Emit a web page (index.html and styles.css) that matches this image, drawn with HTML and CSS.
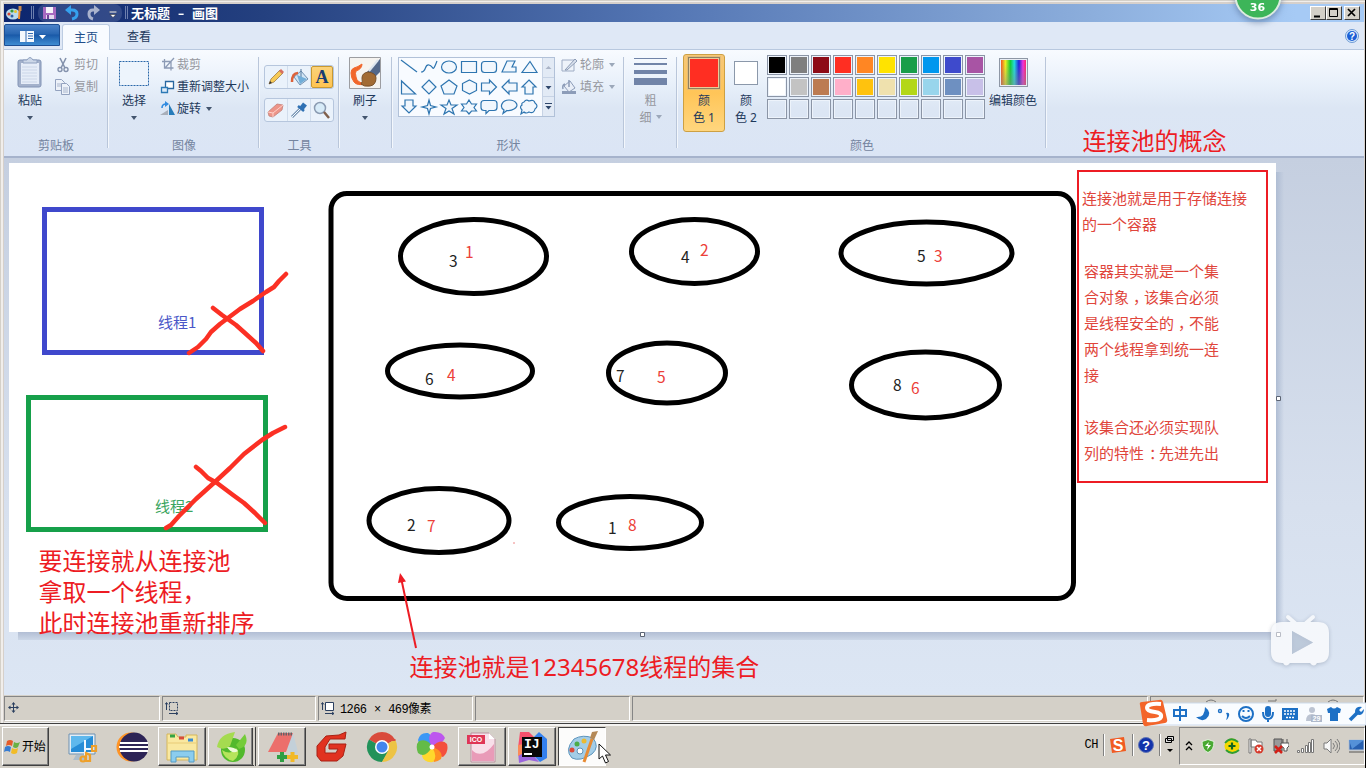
FILE: index.html
```html
<!DOCTYPE html>
<html lang="zh-CN">
<head>
<meta charset="utf-8">
<title>无标题 - 画图</title>
<link rel="stylesheet" href="styles.css">
</head>
<body>
<div class="screen">
<div class="window">
  <header class="titlebar">
    <svg class="quick" width="127" height="18" viewBox="4 4 127 18">
      <ellipse cx="13" cy="14" rx="7" ry="5.5" fill="#b9d9ec"/><circle cx="9" cy="14" r="1.6" fill="#d8472f"/><circle cx="12" cy="11" r="1.6" fill="#3b9a3a"/><circle cx="15.500" cy="11.500" r="1.500" fill="#e8c22a"/><circle cx="12" cy="16" r="1.500" fill="#2e5fa4"/><path d="M20 6v5" stroke="#c98a4c" stroke-width="3"/><path d="M19.500 11l-.5 8" stroke="#f08b28" stroke-width="2"/>
      <path d="M31.500 6v13M33.500 6v13M125.500 6v13M127.500 6v13" stroke="#6d7fae"/>
      <rect x="38" y="4" width="84" height="18" rx="8" fill="#7888b5" opacity=".3"/>
      <path d="M43 7h13v12H43z" fill="#a86ac1"/><path d="M46 7h7v6h-7z" fill="#f6f3fa"/><path d="M46 15h8v4h-8z" fill="#e5d9ef"/><path d="M48 15v4" stroke="#72449a" stroke-width="2"/>
      <path d="M68 10h4q5 0 5 4t-5 5" fill="none" stroke="#35a1ee" stroke-width="3"/><path d="M65 10l6-5v10z" fill="#35a1ee"/>
      <path d="M97 10h-4q-4 0-4 4t4 5" fill="none" stroke="#aab3cd" stroke-width="3"/><path d="M100 10l-6-5v10z" fill="#aab3cd"/>
      <path d="M109 12h8M110 14.500h6l-3 3z" fill="#fff" stroke="#222" stroke-width=".5"/><path d="M109.500 12h7" stroke="#fff"/>
    </svg>
    <h1 class="title">无标题<span class="dash">-</span>画图</h1>
    <div class="winbtns">
      <span class="winbtn"><svg width="14" height="12"><path d="M3 9.500h6" stroke="#000" stroke-width="2"/></svg></span>
      <span class="winbtn"><svg width="14" height="12"><path d="M2.500 1.500h8v8h-8zM2 2.500h9" fill="none" stroke="#000"/></svg></span>
      <span class="winbtn close"><svg width="14" height="12"><path d="M3 2l7 7M10 2l-7 7" stroke="#000" stroke-width="1.700"/></svg></span>
    </div>
  </header>

  <nav class="tabs">
    <button class="filebtn"><svg width="30" height="14" viewBox="0 0 30 14"><path d="M1 1h14v11H1z" fill="#f5f9fd"/><path d="M7 1v11M9 3.500h5M9 6h5M9 8.500h5" stroke="#366db2"/><path d="M20 5h7l-3.500 4z" fill="#fff"/></svg></button>
    <a class="tab active">主页</a>
    <a class="tab">查看</a>
    <svg class="help" width="14" height="14" viewBox="0 0 14 14"><circle cx="7" cy="7" r="6.500" fill="#d8e9fb" stroke="#6f9bd4"/><circle cx="7" cy="7" r="5" fill="#1c5fd6"/><text x="7" y="10.500" text-anchor="middle" class="qmark">?</text></svg>
  </nav>

  <section class="ribbon">
    <div class="group">
      <div class="tools clip">
        <div class="big">
          <svg width="26" height="32" viewBox="0 0 26 32"><rect x="1" y="3" width="23" height="27" rx="2" fill="#a3b1cb" stroke="#8294b6"/><path d="M4 6h18v21H4z" fill="#e6edf8"/><path d="M5 10h15M5 13h15M5 16h15M5 19h15M5 22h15M5 25h15" stroke="#cbd6e8"/><path d="M6 6V3h4q3-5 6 0h4v3z" fill="#ccd7e8" stroke="#8ea0bf"/></svg>
          <span>粘贴</span><i class="caret"></i>
        </div>
        <div class="list dim">
          <div class="cmd"><svg width="16" height="16" viewBox="0 0 16 16"><path d="M5 1l5 10M11 1L6 11" stroke="#8492ad" stroke-width="1.600"/><circle cx="5" cy="12.500" r="2" fill="none" stroke="#8492ad" stroke-width="1.400"/><circle cx="11" cy="12.500" r="2" fill="none" stroke="#8492ad" stroke-width="1.400"/></svg>剪切</div>
          <div class="cmd"><svg width="16" height="16" viewBox="0 0 16 16"><g fill="#edf2f9" stroke="#93a2bf"><path d="M.5.500h6l3 3v8h-9z"/><path d="M6.500 4.500h5l3 3v8h-8z"/></g><path d="M2 5h4M2 7h4M8 9h5M8 11h5M8 13h5" stroke="#a9b6cd"/></svg>复制</div>
        </div>
      </div>
      <div class="caption">剪贴板</div>
    </div>

    <div class="group">
      <div class="tools image">
        <div class="big">
          <svg width="32" height="32" viewBox="0 0 32 32"><path d="M1.500 4.500h29v24h-29z" fill="#edf4fc" stroke="#2866a8" stroke-dasharray="2 1"/></svg>
          <span>选择</span><i class="caret"></i>
        </div>
        <div class="list">
          <div class="cmd dim"><svg width="16" height="16" viewBox="0 0 16 16"><path d="M4.500 2v9h9M2 4.500h9v9M14 1L5 11" fill="none" stroke="#8d9bb5" stroke-width="1.300"/></svg>裁剪</div>
          <div class="cmd"><svg width="16" height="16" viewBox="0 0 16 16"><path d="M5.500 2.500h8v7h-8z" fill="#fff" stroke="#28669f" stroke-width="1.300"/><path d="M1.500 8.500h6v5h-6z" fill="#dceaf8" stroke="#2c79b5" stroke-width="1.300"/></svg>重新调整大小</div>
          <div class="cmd"><svg width="16" height="16" viewBox="0 0 16 16"><path d="M0 14h8V9z" fill="#a8aeb9"/><path d="M9 3v11h6z" fill="#277cba"/><path d="M2 7q0-4 4-4" fill="none" stroke="#318be0" stroke-width="1.600"/><path d="M5 0l4 3-4 3z" fill="#318be0"/></svg>旋转<i class="caret side"></i></div>
        </div>
      </div>
      <div class="caption">图像</div>
    </div>

    <div class="group">
      <div class="tools toolset">
        <div class="trio">
          <span><svg width="22" height="20" viewBox="0 0 22 20"><path d="M4 17l2-5 9-9 3 3-9 9z" fill="#f6ca57" stroke="#a07c48" stroke-width=".8"/><path d="M14 4l3 3 2-2-3-3z" fill="#d66f60"/><path d="M4 17l1-3 2 2z" fill="#333"/></svg></span>
          <span><svg width="22" height="20" viewBox="0 0 22 20"><path d="M6 10l7-6 7 8-8 6z" fill="#d0e5f5" stroke="#55799e" stroke-width=".8"/><path d="M13 2v9" stroke="#55799e"/><path d="M9 8l10 4-7 5z" fill="#71add8"/><path d="M10 6q-6 0-6 9" fill="none" stroke="#dc623b" stroke-width="2.500"/></svg></span>
          <span class="on">A</span>
        </div>
        <div class="trio">
          <span><svg width="22" height="20" viewBox="0 0 22 20"><path d="M3 12l9-8 6 1-1 5-9 7-4-1z" fill="#ed9589" stroke="#c08078" stroke-width=".8"/><path d="M3 12l5 1 10-8M8 13v4" fill="none" stroke="#ffd2ca"/></svg></span>
          <span><svg width="22" height="20" viewBox="0 0 22 20"><path d="M4 17l8-8" stroke="#7895b4" stroke-width="3"/><path d="M4 17l8-8" stroke="#f5fbff"/><path d="M10 6l6 5" stroke="#2f71b4" stroke-width="2.500"/><path d="M13 9l4-5" stroke="#2f71b4" stroke-width="5"/></svg></span>
          <span><svg width="22" height="20" viewBox="0 0 22 20"><circle cx="9" cy="8" r="5.500" fill="#d7ebf8" stroke="#8b9bb2" stroke-width="1.500"/><path d="M13 12l5 6" stroke="#80604b" stroke-width="2.500"/></svg></span>
        </div>
      </div>
      <div class="caption">工具</div>
    </div>

    <div class="group">
      <div class="tools brush">
        <div class="big"><svg width="32" height="32" viewBox="0 0 32 32"><path d="M.5.500h31v31H.5z" fill="#f5f3f0" stroke="#9c9da1"/><path d="M13 7Q9 10 5 11q-3 1-3 5 0 5 3 9 3 4 12 2-9-1-10-7-1-4 0-6 6-2 6-7z" fill="#f1662a" stroke="#f1662a"/><path d="M31 2v13l-6 6-7-6z" fill="#536789"/><path d="M29 3L20 14" stroke="#dde5ee" stroke-width="2"/><path d="M19 15q8 1 8 6 0 7-6 8-6 1-9-2 2-2 1-6 0-5 6-6z" fill="#a26b34" stroke="#79512b"/></svg><span>刷子</span><i class="caret"></i></div>
      </div>
    </div>

    <div class="group">
      <div class="tools shapes">
        <div class="gallery">
          <svg width="143" height="58" viewBox="399 58 143 58" fill="#f1f7fd" stroke="#2e75b0" stroke-width="1.200">
            <path d="M401 60l16 12" fill="none"/><path d="M421 72c6 0 3-8 8-7s3 9 8-4" fill="none"/><ellipse cx="449" cy="67" rx="7.500" ry="6"/><path d="M461.500 61.500h15v11h-15z"/><rect x="481.500" y="61.500" width="15" height="11" rx="3"/><path d="M502 72l5-11h8l-3 6h4v5z"/><path d="M530 61.500l7 11h-15z"/>
            <path d="M401.500 81v13h14z"/><path d="M429 80l7 7-7 7-7-7z"/><path d="M449 80l8 6-3 8h-10l-3-8z"/><path d="M469.500 80l7 3.500v7l-7 3.500-7-3.500v-7z"/><path d="M481.500 83h8v-3l7 7-7 7v-3h-8z"/><path d="M517 83h-8v-3l-7 7 7 7v-3h8z"/><path d="M529 80l7 7h-3v7h-8v-7h-3z"/>
            <path d="M405 100h8v6h3l-7 7-7-7h3z"/><path d="M429 100l1.500 5.500 5.500 1.500-5.500 1.500-1.500 5.500-1.500-5.500-5.500-1.500 5.500-1.500z"/><path d="M449 100l2 5h6l-5 3.500 2 5.500-5-3-5 3 2-5.500-5-3.500h6z"/><path d="M469 100l2.500 4h5l-2.500 3.500 2.500 3.500h-5l-2.500 3-2.500-3h-5l2.500-3.500-2.500-3.500h5z"/><path d="M484 100.500h10q3 0 3 3v4q0 3-3 3h-5l-3 3v-3h-2q-3 0-3-3v-4q0-3 3-3z"/><path d="M504 110c-5-3-2-10 5-10s11 6 5 9q-3 2-7 1.500l-4 3z"/><path d="M524 102q2-3 5-1 5-2 6 2 4 3 0 6-1 5-6 3-3 2-5 0l-3 2 1-4q-3-3 0-5-1-2 2-3z"/>
          </svg>
          <svg width="12" height="58" viewBox="0 0 12 58"><path d="M0 0h13v58H0z" fill="#e2eaf5"/><path d="M.5 0v58M0 19.500h13M0 38.500h13" stroke="#c7d3e5"/><path d="M3.500 11l3-3 3 3z" fill="#aab4c7"/><path d="M3.500 28h6l-3 3.500z" fill="#30486c"/><path d="M3 45.500h7" stroke="#30486c"/><path d="M3.500 48h6l-3 3.500z" fill="#30486c"/></svg>
        </div>
        <div class="list dim">
          <div class="cmd"><svg width="17" height="16" viewBox="0 0 17 16"><path d="M1 3h12v11H1z" fill="#eef3fa" stroke="#9eacc4"/><path d="M4 13L14 2l2 2L6 13z" fill="#dae2ee" stroke="#8c9bb5"/></svg>轮廓<i class="caret side"></i></div>
          <div class="cmd"><svg width="17" height="16" viewBox="0 0 17 16"><path d="M1 12h14v3H1z" fill="#8c9cb8"/><path d="M3 7l6-5 5 7-6 4z" fill="#e8eef7" stroke="#8c9cb8"/><path d="M8 1v7M4 5q-3 1-2 5" fill="none" stroke="#8c9cb8" stroke-width="1.500"/></svg>填充<i class="caret side"></i></div>
        </div>
      </div>
      <div class="caption">形状</div>
    </div>

    <div class="group">
      <div class="tools size"><svg width="33" height="34" viewBox="0 0 33 34"><path d="M0 1.500h33" stroke="#7184a8"/><path d="M0 7h33" stroke="#7184a8" stroke-width="2"/><path d="M0 15h33" stroke="#7184a8" stroke-width="4"/><path d="M0 24.500h33" stroke="#7184a8" stroke-width="7"/></svg><div class="stack dim">粗<br>细<i class="caret side"></i></div></div>
    </div>

    <div class="group">
      <div class="tools colors">
        <div class="slot chosen"><b class="sw1"></b><span>颜<br>色 1</span></div>
        <div class="slot"><b class="sw2"></b><span>颜<br>色 2</span></div>
        <div class="palette">
          <i class="black"></i><i class="gray"></i><i class="maroon"></i><i class="red"></i><i class="orange"></i><i class="yellow"></i><i class="green"></i><i class="blue"></i><i class="indigo"></i><i class="purple"></i>
          <i class="white"></i><i class="silver"></i><i class="brown"></i><i class="pink"></i><i class="gold"></i><i class="cream"></i><i class="lime"></i><i class="sky"></i><i class="steel"></i><i class="lilac"></i>
          <i></i><i></i><i></i><i></i><i></i><i></i><i></i><i></i><i></i><i></i>
        </div>
        <div class="edit"><b></b><span>编辑颜色</span></div>
      </div>
      <div class="caption">颜色</div>
    </div>
  </section>

  <main class="workspace">
    <svg width="1360" height="537" viewBox="4 158 1360 537">
      <defs>
        <linearGradient id="sr"><stop stop-color="#afbdd3"/><stop offset="1" stop-color="#afbdd3" stop-opacity="0"/></linearGradient>
        <linearGradient id="sb" x2="0" y2="1"><stop stop-color="#b2bed4"/><stop offset="1" stop-color="#ccd7e7"/></linearGradient>
      </defs>
      <path d="M1276 172h8v468h-8z" fill="url(#sr)"/><path d="M18 632h1263v8H18z" fill="url(#sb)"/>
      <path d="M9 163h1267v469H9z" fill="#fff"/>
      <g fill="#fff" stroke="#5c6473"><path d="M1276.500 396.500h4v4h-4zM640.500 632.500h4v4h-4zM1276.500 632.500h4v4h-4z"/></g>
      <path d="M44.500 209.500h217v143h-217z" fill="none" stroke="#3f48cc" stroke-width="5"/>
      <path d="M28.500 397.500h237v132h-237z" fill="none" stroke="#16a04a" stroke-width="5"/>
      <text x="158" y="328" class="note" fill="#4a57c8">线程1</text>
      <text x="155" y="512" class="note" fill="#3aa560">线程2</text>
      <g fill="none" stroke="#fb3024" stroke-width="4.500" stroke-linecap="round" stroke-linejoin="round">
        <path d="M189 353l9-6 8-8 5-7 9-8 8-6 12-9 13-8 13-9 8-5 5-6 7-7"/><path d="M213 308l9 7 14 10 10 9 10 9 7 8"/>
        <path d="M166 528l5-3 8-9 17-17 20-18 14-13 14-14 18-14 11-7 12-6"/><path d="M196 467l5 4 7 7 9 5 16 12 11 8 11 10 10 10"/>
      </g>
      <g fill="none" stroke="#000" stroke-width="5">
        <rect x="331" y="193.500" width="742.500" height="405" rx="16"/>
        <ellipse cx="473.500" cy="256.500" rx="73" ry="37"/><ellipse cx="694.500" cy="251.500" rx="63" ry="32"/><ellipse cx="926.500" cy="253" rx="85.500" ry="31"/>
        <ellipse cx="460" cy="371" rx="72.500" ry="26"/><ellipse cx="667" cy="373" rx="58.500" ry="30"/><ellipse cx="925.500" cy="385" rx="74" ry="33"/>
        <ellipse cx="439" cy="520.500" rx="70" ry="32"/><ellipse cx="630" cy="522.500" rx="71.500" ry="26"/>
      </g>
      <g class="num" fill="#222"><text x="449" y="267">3</text><text x="681" y="263">4</text><text x="917" y="262">5</text><text x="425" y="385">6</text><text x="616" y="382">7</text><text x="893" y="391">8</text><text x="407" y="531">2</text><text x="608" y="534">1</text></g>
      <g class="num" fill="#ec4038"><text x="465" y="258">1</text><text x="700" y="256">2</text><text x="934" y="262">3</text><text x="447" y="381">4</text><text x="657" y="383">5</text><text x="911" y="394">6</text><text x="427" y="532">7</text><text x="628" y="531">8</text></g>
      <path d="M513 543h2" stroke="#e88"/>
      <g class="note" fill="#e0453b">
        <text x="1082" y="204">连接池就是用于存储连接</text><text x="1082" y="230">的一个容器</text>
        <text x="1084" y="277">容器其实就是一个集</text><text x="1084" y="303">合对象<tspan dx="4">，</tspan><tspan dx="-4">该集合必须</tspan></text><text x="1084" y="329">是线程安全的<tspan dx="4">，</tspan><tspan dx="-4">不能</tspan></text><text x="1084" y="355">两个线程拿到统一连</text><text x="1084" y="381">接</text>
        <text x="1084" y="433">该集合还必须实现队</text><text x="1084" y="459">列的特性<tspan dx="5">：</tspan><tspan dx="-5">先进先出</tspan></text>
      </g>
    </svg>
  </main>

  <footer class="status">
    <div><svg width="14" height="14" viewBox="0 0 14 14"><path d="M6.500 2v9M2 6.500h9" stroke="#2c4060"/><path d="M4.500 3.500l2-2.500 2 2.500zM4.500 9.500l2 2.500 2-2.500zM3.500 4.500L1 6.500l2.500 2zM9.500 4.500l2.500 2-2.500 2z" fill="#2c4060"/></svg></div>
    <div><svg width="14" height="14" viewBox="0 0 14 14" fill="none" stroke="#2c4060"><path d="M1.500 9V2M0 3.500l1.500-2 1.500 2M4 12.500h9M11 11l2 1.500-2 1.500"/><path d="M4.500 1.500h8v8h-8z" stroke-dasharray="2 1"/></svg></div>
    <div><svg width="14" height="14" viewBox="0 0 14 14" fill="none" stroke="#2c4060"><path d="M1.500 9V2M0 3.500l1.500-2 1.500 2M4 12.500h9M11 11l2 1.500-2 1.500"/><path d="M4.500 1.500h8v8h-8z" fill="#fff"/></svg><span class="px">1266 × 469像素</span></div>
    <div></div><div></div><div></div>
  </footer>
</div>

<div class="taskbar">
  <button class="start"><svg width="17" height="16" viewBox="0 0 17 16"><path d="M3 2q3-2 6 0L8 7Q5 5 2 7z" fill="#e55b2a"/><path d="M10 3q3 2 6 0l-2 5q-2 2-5 0z" fill="#69b144"/><path d="M1 8q3-2 6 0l-1 5q-3-2-6 0z" fill="#377cd1"/><path d="M8 9q3 2 6 0l-1 5q-3 2-6 0z" fill="#f2bc27"/></svg>开始</button>
  <div class="apps">
    <span><svg viewBox="0 0 32 32"><path d="M3 3h26v20H3z" fill="#e5edf4" stroke="#6d91b2"/><path d="M5 5h22v16H5z" fill="#258cd7"/><path d="M5 5h22L5 18z" fill="#5eb8ed"/><path d="M10 24h8l2 5H7z" fill="#adbdca"/><path d="M19 9v15M18 18h9" stroke="#eef7ff" stroke-width="2"/><g fill="none" stroke="#eea02a" stroke-width="2.200"><circle cx="17" cy="28" r="2.500"/><path d="M26 15h4v5h-4zM20 22v8h4v-6z"/></g></svg></span>
    <span><svg viewBox="0 0 32 32"><circle cx="15" cy="16" r="14.500" fill="#ff9425"/><circle cx="18" cy="16" r="14.500" fill="#2d2456"/><path d="M4 12h28M3 16h29M4 20h28" stroke="#fff" stroke-width="2.200"/></svg></span>
    <span class="raised"><svg viewBox="0 0 32 32"><path d="M1 7V3h9l2 3h8V4h11v25H1z" fill="#f9e8a0" stroke="#d5b65a"/><path d="M4 5h5" stroke="#35a344" stroke-width="3"/><path d="M13 7h5" stroke="#d84b3a" stroke-width="3"/><path d="M22 9h5" stroke="#3b8cd2" stroke-width="3"/><path d="M2 12h28" stroke="#e8cb76"/><path d="M5 31V20h23v11h-5v-5H10v5z" fill="#8bcdee" stroke="#549bc4"/></svg></span>
    <span class="raised double"><svg viewBox="0 0 32 32"><circle cx="17" cy="19" r="12" fill="#52b92c"/><path d="M1 16Q3 3 19 1l-5 14q-6 5-13 1z" fill="#a5db50"/><path d="M20 14L29 3q5 12-6 15z" fill="#74cc39"/><path d="M6 19q9 6 14-2 6 6-3 13-9-2-11-11z" fill="#b6e45c"/><path d="M11 16q8 0 11 4-6 4-11-4z" fill="#eefad9"/></svg></span>
    <span class="raised"><svg viewBox="0 0 32 32"><path d="M14 2h13l5 19-6 5z" fill="#c3d0d9"/><path d="M12 2h15l-7 19H2z" fill="#ec6f6b"/><path d="M12 3h15" stroke="#636267" stroke-width="3" stroke-dasharray="1.500 1"/><path d="M11 26h10M16 21v10" stroke="#2f9f43" stroke-width="4"/><path d="M21 26h11M26.500 21v10" stroke="#f2b927" stroke-width="4"/></svg></span>
    <span><svg viewBox="0 0 32 32"><path d="M30 1l-1 7H14l-5 8v6h11l2-4h-9v-5h17l-3 12-6 5H5l-4-5V15L10 5l13-1z" fill="#e13220" stroke="#a82114"/></svg></span>
    <span><svg viewBox="0 0 32 32"><path d="M16 16L3 8.500A15 15 0 0 1 29 8.500z" fill="#d94b3c"/><path d="M16 16L3 8.500A15 15 0 0 0 16 31l7-11z" fill="#22925a"/><path d="M16 16L29 8.500A15 15 0 0 1 16 31l6-11z" fill="#edc344"/><path d="M16 9h13.500" stroke="#d94b3c" stroke-width="2"/><circle cx="16" cy="16" r="7" fill="#fff"/><circle cx="16" cy="16" r="5.500" fill="#4385ec"/></svg></span>
    <span><svg viewBox="0 0 32 32"><path d="M16 16Q3 17 2 9q2-8 10-7 6 3 4 14z" fill="#3c98f5"/><path d="M16 16Q10 5 17 1q9-1 12 6-3 7-13 9z" fill="#bd57ee"/><path d="M16 16q9-9 15-3 2 8-4 13-8-1-11-10z" fill="#f4503d"/><path d="M16 16q12 4 9 12-4 3-7 3-5-5-2-15z" fill="#ff9022"/><path d="M16 16q6 10 1 15-9 1-11-6 1-6 10-9z" fill="#fed82c"/><path d="M16 16Q9 28 2 22-1 14 3 10q9-3 13 6z" fill="#63bb47"/><circle cx="16" cy="16" r="2.500" fill="#fff"/></svg></span>
    <span class="raised"><svg viewBox="0 0 32 32"><path d="M5 2h18l6 6v23H5z" fill="#f8dfe9" stroke="#b9929f"/><path d="M6 30V19q10 10 22-6v17z" fill="#e99bb8"/><path d="M23 2v6h6z" fill="#fff"/><path d="M1 4h18v9H1z" fill="#df3656"/><text x="10" y="11" text-anchor="middle" class="ico">ICO</text></svg></span>
    <span class="raised"><svg viewBox="0 0 32 32"><path d="M4 1h9l6 6-7 16-10-6z" fill="#f6506d"/><path d="M18 6l5-5 8 7v19l-7 4-8-8z" fill="#3480ee"/><path d="M2 20l5 0 10 4 6 7-10-2-10 3z" fill="#9b65dd"/><path d="M2 14l6-1v9l-6 3z" fill="#fb8a58"/><path d="M6 6h20v20H6z" fill="#080808"/><path d="M8 23h8" stroke="#fff" stroke-width="2"/><text x="8" y="17" class="ij">IJ</text></svg></span>
    <span class="pressed"><svg viewBox="0 0 32 32"><path d="M8 8Q17 3 27 7q7 9-1 16-12 8-20 4-8-8 2-19z" fill="#a3cde7" stroke="#5d95bd"/><circle cx="6" cy="19" r="2.500" fill="#db4a3c"/><circle cx="11" cy="13" r="2.500" fill="#4bac47"/><circle cx="18" cy="10" r="2.500" fill="#ebba31"/><circle cx="14" cy="20" r="3" fill="#fff" stroke="#5e91b4"/><path d="M26 8L18 31" stroke="#e78b34" stroke-width="3"/><path d="M24 7l2-6 6-1-4 9z" fill="#b48957"/></svg></span>
  </div>
  <div class="lang"><span class="px">CH</span><i></i>
    <svg width="18" height="18" viewBox="0 0 18 18"><path d="M1 3l14-2 2 14-14 2z" fill="#f15b22"/><text x="9" y="15" text-anchor="middle" class="sogou">S</text></svg><i></i>
    <svg width="16" height="16" viewBox="0 0 16 16"><circle cx="8" cy="8" r="7.500" fill="#1232aa" stroke="#6276b5"/><text x="8" y="12.500" text-anchor="middle" class="q2">?</text></svg><i></i>
    <svg width="10" height="22" viewBox="0 0 10 22"><path d="M2.500 2.500h6v4h-6zM.5 4.500h6v4h-6z" fill="#ddd" stroke="#000"/><path d="M2 15h6l-3 3z"/></svg>
  </div>
  <div class="tray">
    <svg width="8" height="12" viewBox="0 0 8 12" fill="none" stroke="#000" stroke-width="1.300"><path d="M1 5l3-3 3 3M1 10l3-3 3 3"/></svg>
    <svg width="14" height="14" viewBox="0 0 14 14"><path d="M7 .5l6 2q0 9-6 11-6-2-6-11z" fill="#48a932" stroke="#e3f1de"/><path d="M8 3L4 7h3l-1 4 4-5H7z" fill="#fff"/></svg>
    <svg width="16" height="16" viewBox="0 0 16 16"><circle cx="8" cy="8" r="7.500" fill="#f5d800"/><path d="M1 5Q7-2 14 4M2 12q6 6 13 0" fill="none" stroke="#2f9d35" stroke-width="1.800"/><path d="M8 4.500v7M4.500 8h7" stroke="#14651f" stroke-width="2.200"/></svg>
    <svg width="16" height="16" viewBox="0 0 16 16"><path d="M1 1v14h2V1zM3 2h5l1 2h5v7H9L8 9H3z" fill="#fff" stroke="#777"/><circle cx="11" cy="11" r="4.500" fill="#d63a2c"/><path d="M9 9l4 4m0-4l-4 4" stroke="#fff" stroke-width="1.500"/></svg>
    <svg width="16" height="16" viewBox="0 0 16 16"><path d="M1 1h8v12H1z" fill="#999" stroke="#555"/><path d="M10 1v4M14 1v4M8 5h8v3l-2 2v3h-3v-3L8 8z" fill="#fff" stroke="#555"/><path d="M2 8l7 7m0-7l-7 7" stroke="#d41f17" stroke-width="2.500"/></svg>
    <svg width="17" height="14" viewBox="0 0 17 14" fill="#fff" stroke="#777"><path d="M.5 11.500h2v2h-2zM4.500 9.500h2v4h-2zM8.500 6.500h2v7h-2zM11.500 3.500h2v10h-2zM14.500.500h2v13h-2z"/></svg>
    <svg width="17" height="16" viewBox="0 0 17 16" fill="none" stroke="#7b7b7b"><path d="M1 5h3l4-4v14l-4-4H1z" fill="#f7f7f7"/><path d="M10 5q3 3 0 6M12 3q5 5 0 10M14 1q6 7 0 14"/></svg>
    <svg width="16" height="14" viewBox="0 0 16 14"><path d="M1 1h15v10H1z" fill="#2860b0" stroke="#b6c4d7"/><path d="M1 1h15L4 10z" fill="#5591d8"/><path d="M1 13h15" stroke="#555"/></svg>
  </div>
</div>

<svg class="overlay" width="1366" height="768" viewBox="0 0 1366 768">
  <g class="annot">
    <text x="1082.500" y="150">连接池的概念</text><text x="38.500" y="570">要连接就从连接池</text><text x="38.500" y="601">拿取一个线程，</text><text x="38.500" y="632">此时连接池重新排序</text><text x="409.500" y="676">连接池就是12345678线程的集合</text>
  </g>
  <path d="M1078 171h189v311h-189z" fill="none" stroke="#ed1c24" stroke-width="2"/>
  <path d="M416 648L401.500 580" stroke="#ed1c24" stroke-width="2"/><path d="M400 573l6 8.500-8 1.500z" fill="#ed1c24"/>
  <g class="badge"><circle cx="1258" cy="-4" r="22.500" fill="#3db559" stroke="#dcebe0" stroke-width="2"/><text x="1257.500" y="11" text-anchor="middle">36</text></g>
  <g class="tv"><path d="M1288 617l8 7M1313 617l-8 7" stroke="#f7f9fc" stroke-width="4" stroke-linecap="round"/><path d="M1282 622h36q11 0 11 11v19q0 11-11 11h-1q-3 5-7 0h-20q-4 5-7 0h-1q-11 0-11-11v-19q0-11 11-11zM1292 631v23l21-11.500z" fill="#f7f9fc" fill-rule="evenodd"/><path d="M1292 631v23l21-11.500z" fill="#b9c6d9" opacity=".6"/></g>
  <path d="M1276.500 632.500h4v4h-4z" fill="#fff" stroke="#b9bdc6"/>
  <g fill="none" stroke="#777"><path d="M1206 702q5-4 10 0M1328 702q5-4 10 0M1268 701h8v-2"/></g>
  <path d="M1152 703h214v22h-214z" fill="#f9fcff" stroke="#cddbec"/>
  <path d="M1142 702q-3 0-2 3l3 19q1 3 4 2l18-3q3-1 2-4l-4-17q-1-3-4-2z" fill="#f3652a"/><path d="M1161 704q-14-1-14 4 0 3 8 4 7 1 6 5-2 4-14 3" fill="none" stroke="#fff" stroke-width="4"/>
  <g fill="none" stroke="#1d70c5" stroke-width="2"><path d="M1174 710h12v6h-12zM1180 706v15"/><circle cx="1246" cy="714" r="7"/><path d="M1242 716q4 4 8 0M1243.500 710v2M1248.500 710v2"/><circle cx="1220" cy="711" r="1.500" stroke-width="1.400"/><path d="M1263 712q0 7 5 7t5-7M1268 719v3"/></g>
  <path d="M1205 707q8 6 1 12-5 3-10-2 9 1 9-10zM1226 713q4-1 3 3-1 3-3 4 2-4 0-7z" fill="#1d70c5"/><rect x="1265" y="706" width="6" height="11" rx="3" fill="#1d70c5"/>
  <path d="M1282 708h16v12h-16z" fill="#1d70c5"/><path d="M1284 711h12M1284 714h12M1286 717.500h8" stroke="#fff" stroke-width="1.500" stroke-dasharray="2 1"/>
  <circle cx="1312" cy="710" r="3" fill="#bcc4d2"/><path d="M1306 721q0-7 6-7t6 7z" fill="#bcc4d2"/><path d="M1311 715h11v7h-11z" fill="#aeb9cb"/><text x="1316.500" y="721" text-anchor="middle" class="n29">29</text>
  <path d="M1327 709l4-2q3 3 6 0l4 2-1 4h-2v8h-8v-8h-2z" fill="#1d70c5"/><path d="M1350 720l8-8" stroke="#1d70c5" stroke-width="3.500"/><path d="M1362 707l-3 3 2 2 3-3q0 5-4 6-5 0-5-4 1-5 7-4z" fill="#1d70c5"/>
  <path d="M599 744v15l3.500-3 3 7 3-1.500-3-6.500h5z" fill="#fff" stroke="#111"/>
</svg>
</div>
</body>
</html>
```

FILE: styles.css
```css
* { box-sizing: border-box; }
body { margin: 0; width: 1366px; height: 768px; overflow: hidden; background: #000; font: 12px/16px "Noto Sans", "Noto Sans CJK SC", sans-serif; color: #1e395b; }
svg { display: block; flex: none; }
button { font: inherit; }
.screen { position: relative; width: 1366px; height: 768px; overflow: hidden; }
.window { width: 1365px; height: 723px; padding: 4px 1px 0 4px; background: #d6d0cb; box-shadow: inset 1px 1px #d4d0c8, inset 3px 2px #f1eeeb; }
.titlebar { height: 18px; display: flex; align-items: center; background: linear-gradient(90deg, #0c256e 0, #24407f 19%, #5375b3 48%, #8caedc 80%, #a6caf5 95%); }
.title { flex: 1; margin: 0; font: bold 13px/18px "Noto Sans CJK SC", sans-serif; color: #fff; white-space: nowrap; }
.dash { display: inline-block; width: 22px; text-align: center; transform: scaleX(1.4); }
.winbtns { display: flex; padding-right: 4px; }
.winbtn { width: 16px; height: 14px; background: #d4d0c8; border: 1px solid; border-color: #fff #404040 #404040 #fff; overflow: hidden; }
.winbtn.close { margin-left: 2px; }

.tabs { height: 28px; display: flex; align-items: flex-end; background: #dfe8f6; border-bottom: 1px solid #b8c8df; position: relative; }
.filebtn { width: 56px; height: 22px; align-self: flex-start; margin: 2px 2px 0 0; padding: 3px 0 0 14px; border: 1px solid #1d4f94; border-radius: 2px 2px 0 0; background: linear-gradient(#4b82c8, #2866b2 45%, #1959a8 50%, #3f8dd2); }
.tab { width: 58px; height: 25px; padding-top: 5px; text-align: center; color: #1e395b; }
.tab.active { width: 48px; background: #f8fbff; border: 1px solid #bccce2; border-bottom: 0; border-radius: 3px 3px 0 0; height: 26px; color: #204d89; margin-bottom: -1px; }
.help { margin: 0 5px 6px auto; }
.qmark { font: bold 10px "Liberation Sans", sans-serif; fill: #fff; }

.ribbon { height: 108px; display: grid; grid-template-columns: 105px 151px 80px 53px 232px 53px 369px; background: linear-gradient(#f8fbff, #e8f0fa 32%, #dce6f4 55%, #dbe5f5); border-bottom: 2px solid #a6b3cc; }
.group { position: relative; display: flex; flex-direction: column; justify-content: space-between; height: 107px; padding: 0 0 4px; }
.group::after { content: ""; position: absolute; right: 0; top: 7px; width: 2px; height: 91px; background: linear-gradient(90deg, #b9c6da 50%, #f3f7fc 50%); }
.caption { text-align: center; color: #74849f; line-height: 14px; padding-right: 1px; }
.tools { display: flex; align-items: flex-start; padding-top: 7px; }
.big { display: flex; flex-direction: column; align-items: center; white-space: nowrap; }
.big span { margin-top: 4px; line-height: 16px; }
.caret { width: 0; height: 0; border: 3px solid transparent; border-top: 4px solid #43556e; border-bottom: 0; margin-top: 7px; }
.caret.side { display: inline-block; margin: 0 0 0 4px; vertical-align: 3px; }
.list { display: flex; flex-direction: column; gap: 6px; }
.cmd { display: flex; align-items: center; height: 16px; white-space: nowrap; }
.dim { color: #96989f; }
.dim .caret { border-top-color: #9ca8ba; }
.clip { padding-left: 13px; gap: 12px; }
.clip .big { width: 26px; }
.clip .cmd { gap: 3px; }
.image { padding-left: 9px; gap: 10px; }
.image .cmd { gap: 1px; }
.toolset { flex-direction: column; padding: 15px 0 0 4px; gap: 9px; }
.trio { display: flex; width: 70px; height: 24px; border: 1px solid #b6c6dd; border-radius: 3px; background: #eaf2fb; }
.trio span { width: 23px; display: flex; align-items: center; justify-content: center; border-right: 1px solid #d1ddec; }
.trio span:last-child { border-right: 0; }
.trio .on, .trio .on:last-child { border: 1px solid #c99931; border-radius: 2px; background: linear-gradient(#fbd37b, #ffc451); font: bold 18px "Liberation Serif", serif; color: #173d72; }
.brush { padding-left: 9px; }
.brush .big { width: 32px; }
.shapes { padding-left: 5px; gap: 6px; }
.gallery { display: flex; width: 157px; height: 60px; border: 1px solid #b1c1d8; background: #f8fbff; }
.shapes .cmd { gap: 2px; }
.shapes .caret.side { margin-left: 3px; }
.size { flex-direction: column; padding-left: 9px; }
.stack { width: 33px; text-align: center; line-height: 17px; padding-top: 1px; }
.colors { padding: 4px 0 0 5px; }
.slot { width: 42px; height: 78px; display: flex; flex-direction: column; align-items: center; text-align: center; line-height: 17px; color: #1e395b; }
.slot span { white-space: nowrap; }
.chosen { border: 1px solid #cda043; border-radius: 3px; background: linear-gradient(#f6c778, #ffc558 50%, #ffd67e); }
.sw1 { width: 32px; height: 32px; margin: 2px 0 3px; background: #ff2e22; border: 1px solid #8f8061; outline: 1px solid #e4bc76; box-shadow: inset 0 0 0 1px #eacb99; }
.sw2 { width: 24px; height: 24px; margin: 7px 0 7px; background: #fff; border: 1px solid #8b98aa; }
.palette { display: grid; grid-template-columns: repeat(10, 20px); gap: 2px; padding: 1px 0 0; }
.palette i { width: 20px; height: 20px; border: 1px solid #8b95a6; box-shadow: inset 0 0 0 1px #edf3fb; }
.black { background: #000; } .gray { background: #7f7f7f; } .maroon { background: #8d0b17; } .red { background: #ff2e22; } .orange { background: #ff8623; } .yellow { background: #ffe300; } .green { background: #189e49; } .blue { background: #0097ee; } .indigo { background: #3e4acc; } .purple { background: #a854a4; }
.white { background: #fff; } .silver { background: #c3c3c3; } .brown { background: #bc7b52; } .pink { background: #ffafc9; } .gold { background: #ffc20e; } .cream { background: #efe1ae; } .lime { background: #b3d718; } .sky { background: #98d5ec; } .steel { background: #6e90c1; } .lilac { background: #c8c0e8; }
.edit { display: flex; flex-direction: column; align-items: center; width: 56px; white-space: nowrap; }
.edit b { width: 29px; height: 29px; margin: 4px 0 6px; border: 1px solid #8e97a5; box-shadow: inset 0 0 0 1px #e8edf4; background: linear-gradient(#0000 20%, #8888), linear-gradient(90deg, #e32, #ee2 20%, #1c3 38%, #2dd 53%, #22d 70%, #e3d 85%, #f24); }

.workspace { height: 537px; background: linear-gradient(#c5cfe0, #d7e0ee 65%, #dce6f4); }
.note { font: 15px "Noto Sans CJK SC", sans-serif; }
.num { font: 15.500px "Noto Sans CJK SC", sans-serif; }
.status { height: 28px; display: grid; grid-template-columns: 156px 154px 155px 155px 516px 1fr; gap: 2px; padding-top: 1px; background: #d4d0c8; border-bottom: 1px solid #eee; }
.status div { height: 25px; display: flex; align-items: center; gap: 5px; padding: 0 0 2px 2px; color: #000; border: 1px solid; border-color: #858585 #fff #fff #858585; }
.px { font: 12px "Liberation Mono", "Noto Sans CJK SC", monospace; color: #000; white-space: nowrap; }
.status .px { letter-spacing: -.6px; word-spacing: 1px; }

.taskbar { width: 1365px; height: 45px; display: flex; padding-top: 3px; background: #d4d0c8; border-top: 1px solid #404040; box-shadow: inset 0 2px #f4f3f1; }
.start { width: 47px; height: 39px; margin-left: 2px; padding: 0 0 0 1px; display: flex; align-items: center; gap: 1px; color: #000; white-space: nowrap; letter-spacing: -.3px; background: #d4d0c8; border: 1px solid; border-color: #fff #404040 #404040 #fff; box-shadow: inset -1px -1px #808080; }
.apps { display: flex; gap: 2px; margin-left: 9px; }
.apps span { width: 48px; height: 39px; display: flex; align-items: center; justify-content: center; }
.apps svg { width: 32px; height: 32px; }
.raised { border: 1px solid; border-color: #fff #404040 #404040 #fff; box-shadow: inset -1px -1px #808080; }
.apps .double { border-right: 4px double #404040; padding-left: 2px; }
.pressed { border: 1px solid; border-color: #404040 #fff #fff #404040; background: #fcfcfb; }
.ico { font: bold 7px "Liberation Sans", sans-serif; fill: #fff; }
.ij { font: bold 13px "Liberation Mono", monospace; fill: #fff; }
.lang { margin-left: auto; height: 36px; display: flex; align-items: center; gap: 4.500px; }
.lang i { width: 2px; height: 22px; background: linear-gradient(90deg, #808080 50%, #fff 50%); }
.lang .px { letter-spacing: -.5px; }
.sogou { font: bold 16px "Liberation Sans", sans-serif; fill: #fff; }
.q2 { font: bold 13px "Liberation Sans", sans-serif; fill: #fff; }
.tray { width: 186px; height: 38px; margin-left: 4px; padding: 0 0 0 5px; display: flex; align-items: center; justify-content: space-between; border: 1px solid; border-color: #808080 #fff #fff #808080; }

.overlay { position: absolute; left: 0; top: 0; pointer-events: none; }
.annot { font: 24px "Noto Sans", "Noto Sans CJK SC", sans-serif; fill: #ed1c24; }
.badge { font: bold 11px "DejaVu Sans", sans-serif; fill: #fff; filter: drop-shadow(0 3px 3px #47618a88); }
.tv { opacity: .93; filter: drop-shadow(0 1px 2px #7f8ca088); }
.n29 { font: bold 7px "Liberation Sans", sans-serif; fill: #fff; }
```
